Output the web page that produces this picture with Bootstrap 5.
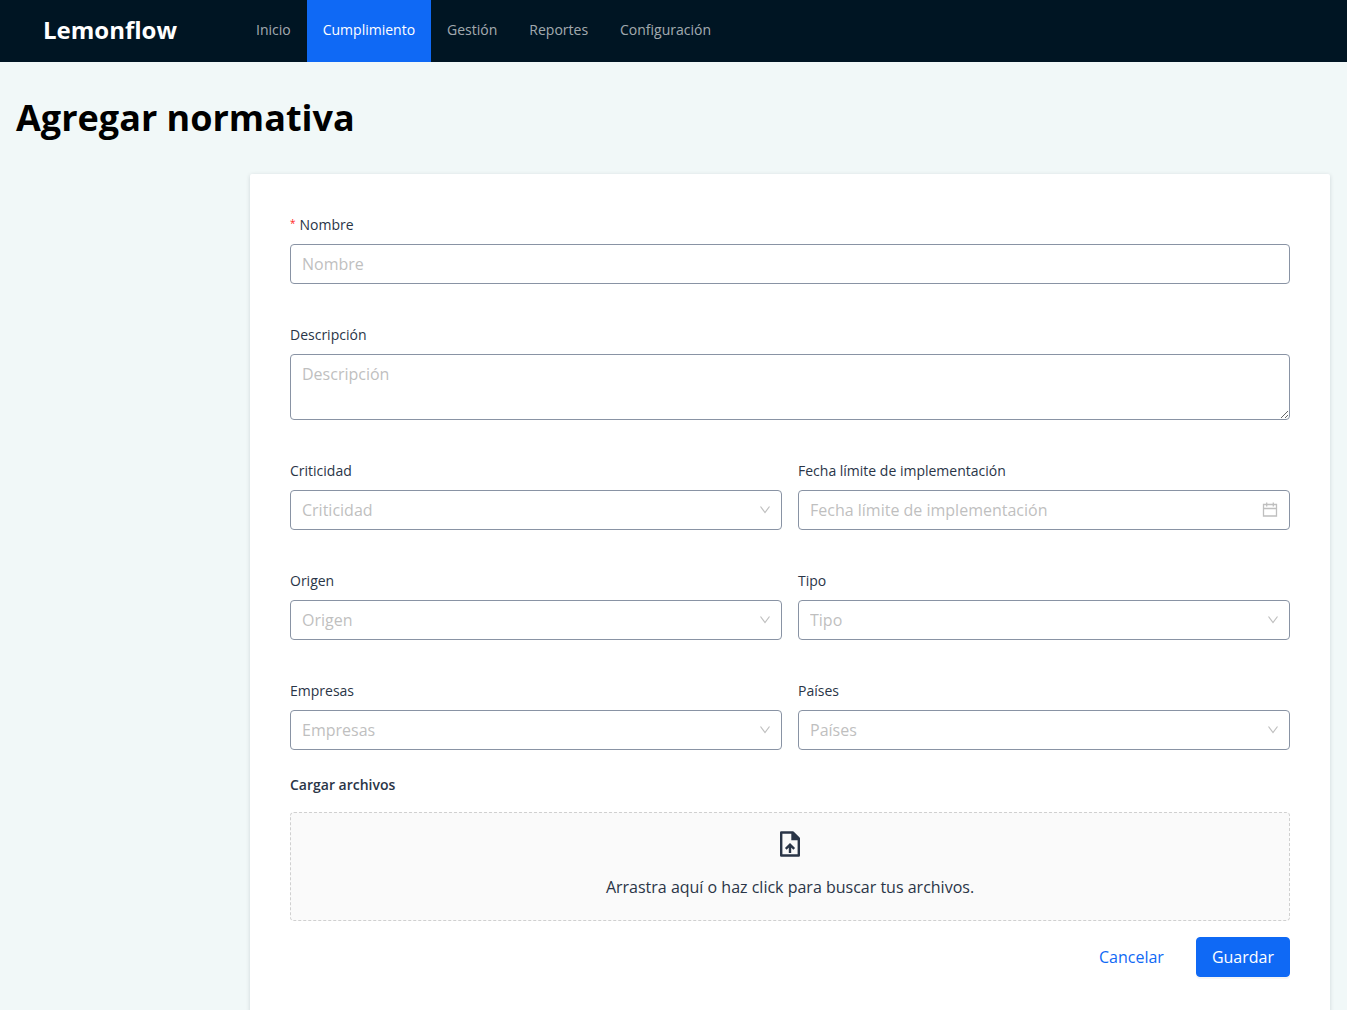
<!DOCTYPE html>
<html lang="es">
<head>
<meta charset="utf-8">
<meta name="viewport" content="width=device-width, initial-scale=1">
<title>Lemonflow - Agregar normativa</title>
<link href="https://cdn.jsdelivr.net/npm/bootstrap@5.3.0/dist/css/bootstrap.min.css" rel="stylesheet">
<style>
  :root { --brand: #0f69f5; --ink: #2a3547; --edge: #8993a4; --hint: #bfbfbf; }
  body { font-family: "Open Sans", sans-serif; font-size: 16px; color: var(--ink); background: #f1f8f8; }
  .topbar { background: #001523; min-height: 62px; }
  .topbar .navbar-brand { width: 240px; padding: 0 0 0 43px; margin: 0; color: #fff; font-size: 24px; font-weight: 700; line-height: 60px; }
  .topbar .navbar-nav .nav-link { padding: 0 16px; font-size: 14px; line-height: 60px; height: 62px; color: rgba(255, 255, 255, .65); }
  .topbar .navbar-nav .nav-link.active { background: var(--brand); color: #fff; font-weight: 500; }
  .page-title { font-size: 36px; font-weight: 700; line-height: 48px; color: #000; }
  .side-space { width: 234px; }
  .form-panel { max-width: 1080px; padding: 40px; background: #fff; border-radius: 2px; box-shadow: 0 1px 4px rgba(0, 21, 41, .15); }
  .form-label { font-size: 14px; line-height: 22px; margin-bottom: 8px; color: var(--ink); }
  .need { font-size: 10px; line-height: 10px; vertical-align: 3px; color: #ff1f24; margin-right: 4px; }
  .form-control, .form-select { height: 40px; padding: 7px 11px; font-size: 16px; line-height: 24px; border: 1px solid var(--edge); border-radius: 4px; }
  .form-control::placeholder { color: var(--hint); }
  textarea.form-control { height: 66px; }
  .form-select { color: var(--hint); background-position: right 10px center; background-size: 12px 12px;
    background-image: url("data:image/svg+xml,%3Csvg xmlns='http://www.w3.org/2000/svg' viewBox='0 0 12 12'%3E%3Cpath d='M1.500 2.500l4.500 6 4.500-6' fill='none' stroke='%23bfbfbf' stroke-width='1.2'/%3E%3C/svg%3E"); }
  .field-row { margin-bottom: 40px; }
  .field-row.last-row { margin-bottom: 24px; }
  .date-icon { right: 12px; top: 12px; pointer-events: none; }
  .upload-title { font-size: 14px; font-weight: 600; line-height: 22px; margin-bottom: 16px; }
  .dropzone { background: #fafafa; border: 1px dashed #d0d0d0; border-radius: 4px; padding: 15px 16px 21px; cursor: pointer; }
  .dropzone svg { margin-bottom: 15px; }
  .btn { font-size: 16px; line-height: 24px; padding: 7px 15px; border-radius: 4px; }
  .btn-link { color: var(--brand); text-decoration: none; }
  .btn-primary { --bs-btn-bg: var(--brand); --bs-btn-border-color: var(--brand); font-weight: 500; box-shadow: 0 2px 0 rgba(0, 0, 0, .04); }
</style>
<script src="https://cdn.jsdelivr.net/npm/bootstrap@5.3.0/dist/js/bootstrap.bundle.min.js" defer></script>
</head>
<body>
<nav class="navbar navbar-expand topbar p-0 align-items-stretch">
  <a class="navbar-brand" href="#">Lemonflow</a>
  <ul class="navbar-nav">
    <li class="nav-item"><a class="nav-link" href="#">Inicio</a></li>
    <li class="nav-item"><a class="nav-link active" aria-current="page" href="#">Cumplimiento</a></li>
    <li class="nav-item"><a class="nav-link" href="#">Gestión</a></li>
    <li class="nav-item"><a class="nav-link" href="#">Reportes</a></li>
    <li class="nav-item"><a class="nav-link" href="#">Configuración</a></li>
  </ul>
</nav>

<main class="px-3 pt-4 mt-2">
  <h1 class="page-title mb-4 pb-2">Agregar normativa</h1>
  <div class="d-flex">
    <div class="side-space flex-shrink-0"></div>
    <form class="form-panel flex-grow-1">
      <div class="field-row">
        <label class="form-label d-block" for="nombre"><span class="need">*</span>Nombre</label>
        <input class="form-control" id="nombre" type="text" placeholder="Nombre" required>
      </div>
      <div class="field-row">
        <label class="form-label d-block" for="descripcion">Descripción</label>
        <textarea class="form-control d-block" id="descripcion" placeholder="Descripción"></textarea>
      </div>
      <div class="row gx-3 field-row">
        <div class="col-6">
          <label class="form-label d-block" for="criticidad">Criticidad</label>
          <select class="form-select" id="criticidad"><option>Criticidad</option></select>
        </div>
        <div class="col-6">
          <label class="form-label d-block" for="fecha">Fecha límite de implementación</label>
          <div class="position-relative">
            <input class="form-control" id="fecha" type="text" placeholder="Fecha límite de implementación">
            <svg class="date-icon position-absolute" width="16" height="16" viewBox="0 0 16 16" fill="none" stroke="#bfbfbf" stroke-width="1.3" aria-hidden="true"><path d="M1.500 2.500h13v11.500h-13zM1.500 6.500h13M4.700 .5v4M11.300 .5v4"/></svg>
          </div>
        </div>
      </div>
      <div class="row gx-3 field-row">
        <div class="col-6">
          <label class="form-label d-block" for="origen">Origen</label>
          <select class="form-select" id="origen"><option>Origen</option></select>
        </div>
        <div class="col-6">
          <label class="form-label d-block" for="tipo">Tipo</label>
          <select class="form-select" id="tipo"><option>Tipo</option></select>
        </div>
      </div>
      <div class="row gx-3 field-row last-row">
        <div class="col-6">
          <label class="form-label d-block" for="empresas">Empresas</label>
          <select class="form-select" id="empresas"><option>Empresas</option></select>
        </div>
        <div class="col-6">
          <label class="form-label d-block" for="paises">Países</label>
          <select class="form-select" id="paises"><option>Países</option></select>
        </div>
      </div>
      <div class="upload-title">Cargar archivos</div>
      <label class="dropzone d-flex flex-column align-items-center mb-3" for="archivos">
        <svg width="32" height="32" viewBox="0 0 32 32" aria-hidden="true"><path d="M7.200 4.500H19l5.800 5.800V27.500H7.200z" fill="none" stroke="#2a3547" stroke-width="2.400" stroke-linejoin="round"/><path d="M17.300 4.500H19.300l6 6v1.800H17.300z" fill="#2a3547"/><path d="M16 25v-8M11.800 20.900L16 16.700l4.200 4.200" fill="none" stroke="#2a3547" stroke-width="2.400"/></svg>
        <span>Arrastra aquí o haz click para buscar tus archivos.</span>
        <input class="visually-hidden" id="archivos" type="file" multiple>
      </label>
      <div class="d-flex justify-content-end gap-3">
        <button class="btn btn-link" type="button">Cancelar</button>
        <button class="btn btn-primary" type="submit">Guardar</button>
      </div>
    </form>
  </div>
</main>
</body>
</html>
